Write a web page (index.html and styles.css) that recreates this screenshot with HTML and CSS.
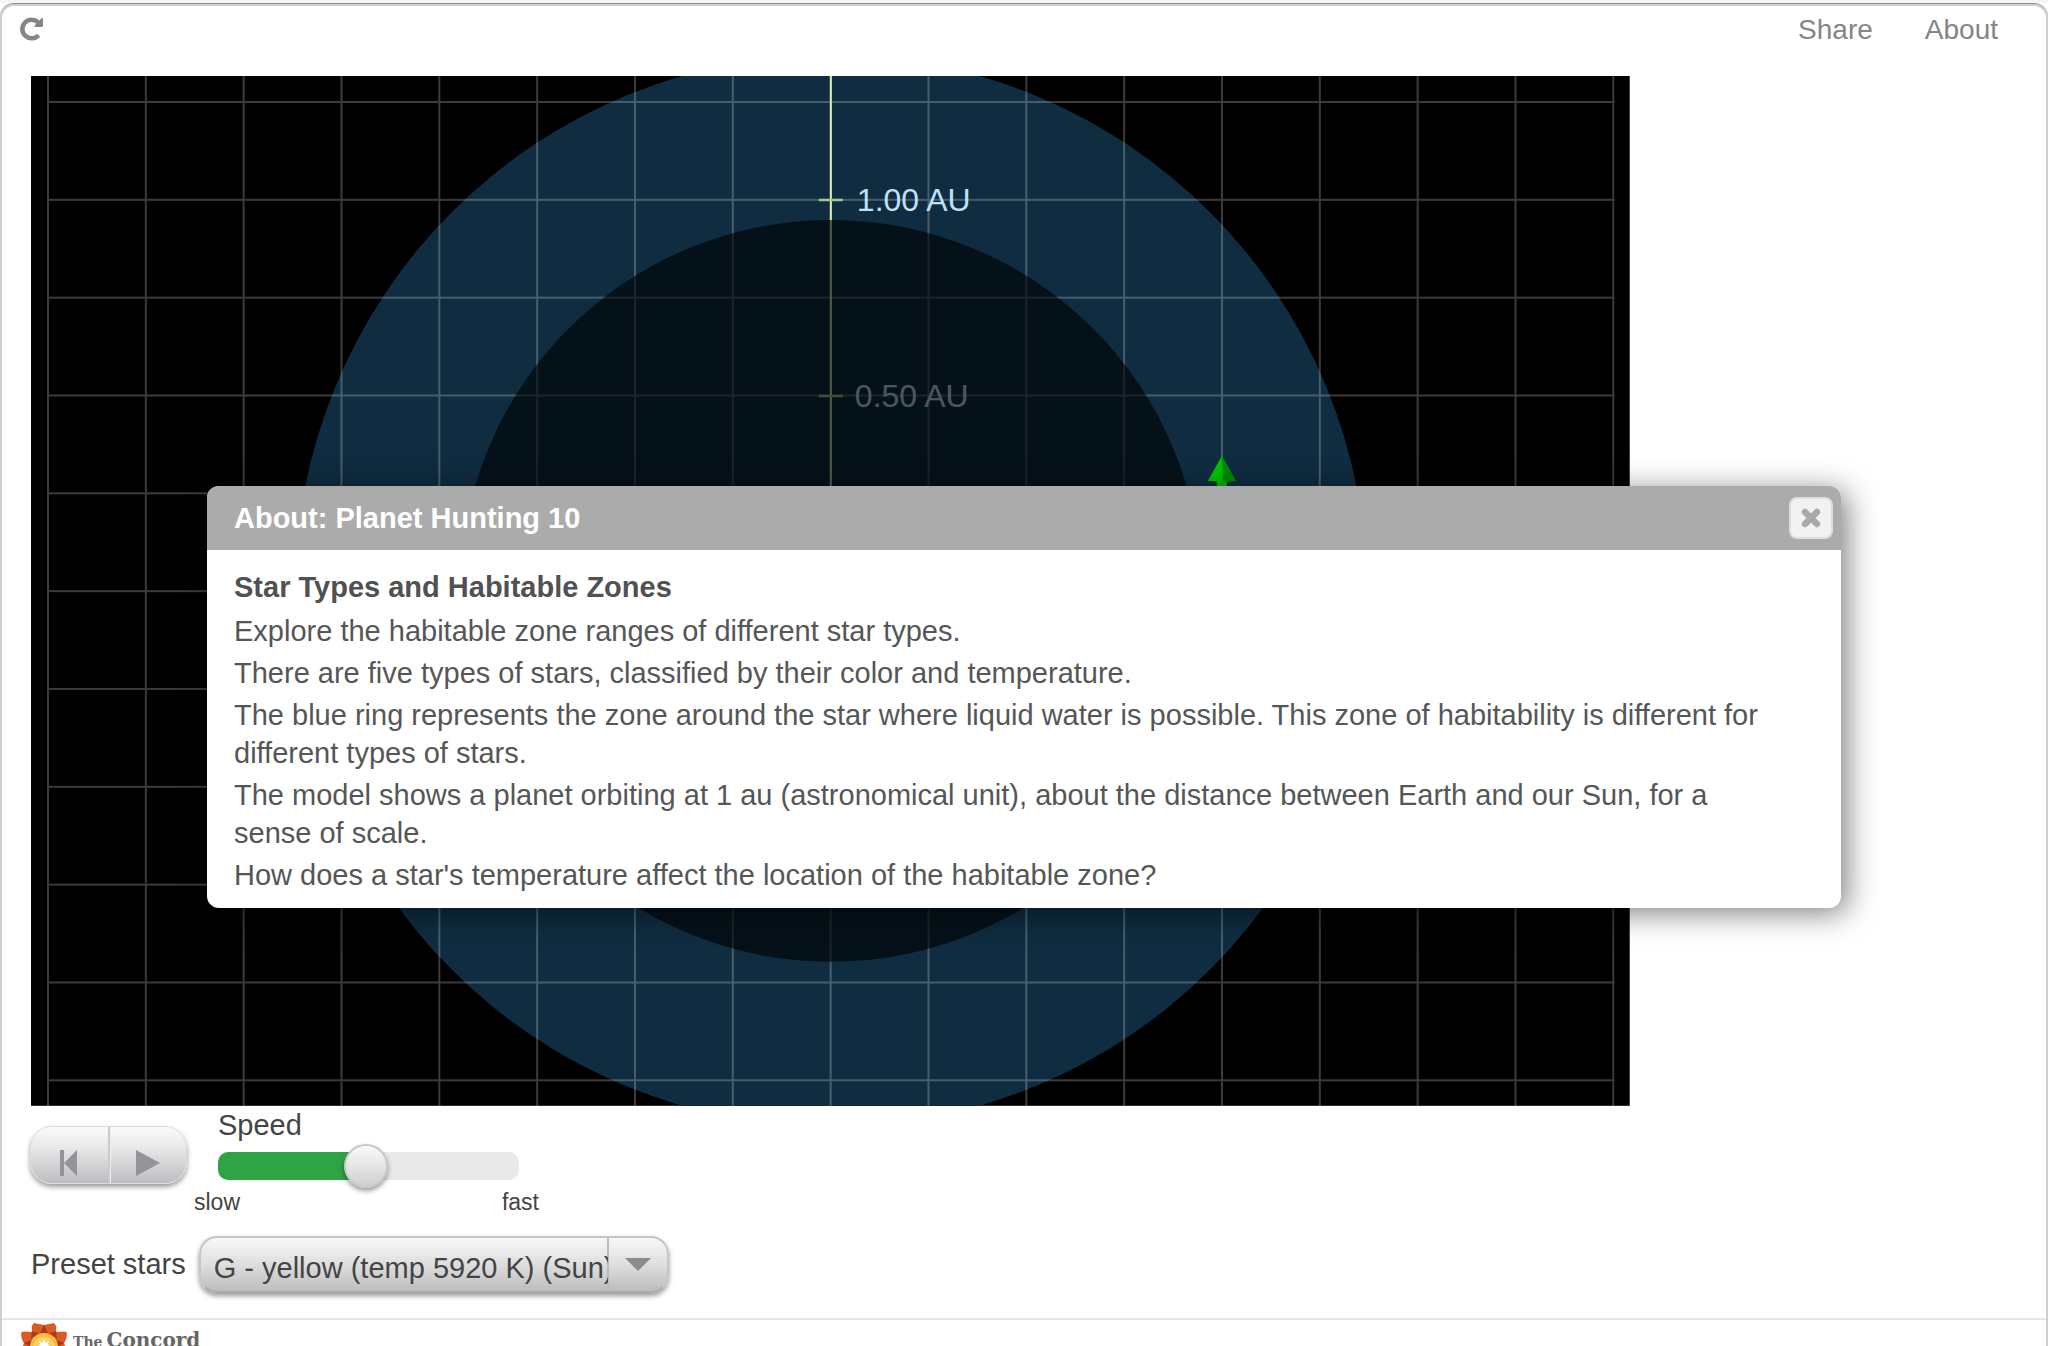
FILE: index.html
```html
<!DOCTYPE html>
<html lang="en">
<head>
<meta charset="utf-8">
<title>Planet Hunting 10</title>
<link rel="stylesheet" href="styles.css">
</head>
<body>
<div class="frame">
  <header class="topbar">
    <button class="reload" type="button" aria-label="Reload">
      <svg width="24" height="24" viewBox="0 0 24 24"><path d="M18.6 18.2A9.3 9.3 0 1 1 18 5.2" fill="none" stroke="#858585" stroke-width="4.6"/><path d="M23 1.6V8.8Q23 10 21.800 10H15.400Q14 9.800 14.600 8.600L21.200 1.600Q22.600 .6 23 1.600Z" fill="#858585"/></svg>
    </button>
    <nav class="links">
      <a href="#share">Share</a>
      <a href="#about">About</a>
    </nav>
  </header>

  <main class="model">
    <svg class="space" viewBox="0 0 1599 1030" role="img" aria-label="Habitable zone of the star">
      <defs>
        <pattern id="grid" x="16" y="25" width="97.85" height="97.85" patternUnits="userSpaceOnUse">
          <path d="M0 1H97.900M1 0V97.900" stroke="#fff" stroke-opacity=".23" stroke-width="2" fill="none"/>
        </pattern>
      </defs>
      <rect width="1599" height="1030" fill="#000"/>
      <circle cx="800" cy="515" r="536" fill="#0f2c40"/>
      <rect x="16" y="0" width="1568" height="1030" fill="url(#grid)"/>
      <path d="M800 0V515" stroke="#d6efb4" stroke-width="2"/>
      <path d="M788 124H812M788 320H812" stroke="#a9c596" stroke-width="2.500"/>
      <g class="au"><text x="826" y="135">1.00 AU</text><text x="824" y="331">0.50 AU</text></g>
      <circle cx="800" cy="515" r="371" fill="#000" fill-opacity=".61"/>
      <path d="M1186 405H1196V440H1186Z" fill="#0b0"/>
      <path d="M1191 380L1205 405L1191 406L1177 405Z" fill="#00c400"/>
      <path d="M1191 380L1205 405L1192 406Z" fill="#008a00"/>
    </svg>

    <div class="controls">
      <div class="playback">
        <button type="button" aria-label="Reset"><svg width="20" height="26" viewBox="0 0 20 26"><path d="M1 0H5V26H1ZM18 0V26L5 13Z" fill="#929497"/></svg></button>
        <button type="button" aria-label="Play"><svg width="24" height="26" viewBox="0 0 24 26"><path d="M0 0L24 13L0 26Z" fill="#929497"/></svg></button>
      </div>
      <div class="speed">
        <label for="speed">Speed</label>
        <input id="speed" type="range" min="0" max="100" value="49">
        <div class="ends"><span>slow</span><span>fast</span></div>
      </div>
    </div>

    <div class="preset">
      <label for="star">Preset stars</label>
      <div class="picker">
        <select id="star"><option>G - yellow (temp 5920 K) (Sun)</option></select>
        <svg class="arrow" width="26" height="13" viewBox="0 0 26 13"><path d="M0 0H26L13 13Z" fill="#8c8c8c"/></svg>
      </div>
    </div>
  </main>

  <footer class="footer">
    <svg width="48" height="48" viewBox="0 0 48 48">
      <g fill="#d95b26">
        <path d="M12 14L11.700 4L14 1L24 3L34 1L36.300 4L36 14L24 22Z"/>
        <path d="M14 10L3 9.500L1 11L1.500 16L5 24L12 24ZM34 10L45 9.500L47 11L46.500 16L43 24L36 24Z"/>
        <path d="M5 20L1 27L2 31L8 38L16 30ZM43 20L47 27L46 31L40 38L32 30ZM8 34L8 45L22 46L24 36ZM40 34L40 45L26 46L24 36Z"/>
      </g>
      <path d="M12 9.500L19 11L11 17ZM36 9.500L29 11L37 17ZM24 3L28 11H20ZM4 21L11 18V25ZM44 21L37 18V25Z" fill="#a83a18"/>
      <circle cx="24" cy="25" r="14" fill="#f9b942"/>
      <circle cx="24" cy="26" r="11" fill="#fcd165"/>
      <path d="M24 17L25.500 21L29 19L27.500 22.500L32 25L27.500 27L24 33L20.500 27L16 25L20.500 22.500L19 19L22.500 21Z" fill="#fff"/>
    </svg>
    <span class="brand"><small>The</small>Concord</span>
  </footer>
</div>

<section class="dialog" role="dialog" aria-labelledby="dialog-title">
  <header class="dialog-head">
    <h2 id="dialog-title">About: Planet Hunting 10</h2>
    <button class="close" type="button" aria-label="Close"><svg width="20" height="20" viewBox="0 0 20 20"><path d="M4 4L16 16M16 4L4 16" stroke="#a9a9a9" stroke-width="6.500" stroke-linecap="round"/></svg></button>
  </header>
  <div class="dialog-body">
    <h3>Star Types and Habitable Zones</h3>
    <p>Explore the habitable zone ranges of different star types.</p>
    <p>There are five types of stars, classified by their color and temperature.</p>
    <p>The blue ring represents the zone around the star where liquid water is possible. This zone of habitability is different for different types of stars.</p>
    <p>The model shows a planet orbiting at 1 au (astronomical unit), about the distance between Earth and our Sun, for a sense of scale.</p>
    <p>How does a star's temperature affect the location of the habitable zone?</p>
  </div>
</section>
</body>
</html>
```
FILE: styles.css
```css
* { box-sizing: border-box; }

body {
  margin: 0;
  height: 100vh;
  overflow: hidden;
  border-top: 3px solid #f5f5f6;
  background: #fff;
  color: #444;
  font-family: "Liberation Sans", Arial, sans-serif;
  font-size: 29px;
}

button, select, input { font: inherit; color: inherit; margin: 0; }

.frame {
  border: 2px solid #cfcfcf;
  border-radius: 14px;
  box-shadow: 0 -1px #8e8e90;
  margin-top: 1px;
}

.topbar {
  display: flex;
  justify-content: space-between;
  height: 70px;
  padding: 10px 48px 0 18px;
}

.reload {
  width: 24px;
  height: 26px;
  padding: 0;
  border: 0;
  background: none;
}

.reload svg, .close svg, .playback svg { display: block; }

.links { display: flex; gap: 52px; font-size: 28px; line-height: 28px; }
.links a { color: #858585; text-decoration: none; }

.model { padding: 0 29px 25px; }

.space { display: block; width: 80.5%; }
.au { fill: #bfe0f6; font-size: 32px; }

.controls { display: flex; gap: 7px; align-items: flex-start; }

.playback {
  display: flex;
  width: 157px;
  height: 58px;
  margin: 20px 0 0 -1px;
  border: 1px solid #dcdcdd;
  border-radius: 22px;
  background: linear-gradient(#fbfbfb, #e6e6e7 40%, #bcbdc0);
  box-shadow: 0 3px 5px rgba(0, 0, 0, .4);
}

.playback button {
  display: flex;
  flex: 1;
  align-items: center;
  justify-content: center;
  padding: 16px 0 0;
  border: 0;
  background: none;
}

.playback button + button { border-left: 2px solid #c9cacc; box-shadow: inset 1px 0 #eee; }

.speed { width: 345px; }
.speed label { display: block; padding-left: 24px; line-height: 38px; }

.speed input {
  display: block;
  appearance: none;
  width: 301px;
  height: 44px;
  margin: 0 24px;
  background: none;
}

.speed input::-webkit-slider-runnable-track {
  height: 28px;
  border-radius: 10px;
  background: linear-gradient(90deg, #2fa444 49%, #e9e9e9 49%);
}

.speed input::-webkit-slider-thumb {
  appearance: none;
  width: 44px;
  height: 44px;
  margin-top: -8px;
  border: 2px solid #c8c8c8;
  border-radius: 50%;
  background: linear-gradient(#fafafa, #cfcfcf);
  box-shadow: 0 3px 5px rgba(0, 0, 0, .4);
}

.ends {
  display: flex;
  justify-content: space-between;
  font-size: 23px;
  line-height: 28px;
}

.preset { display: flex; align-items: center; gap: 13px; margin-top: 20px; }

.picker { position: relative; width: 470px; }

.picker select {
  appearance: none;
  display: block;
  width: 100%;
  height: 57px;
  padding: 7px 59px 0 13px;
  border: 2px solid #c6c6c6;
  border-bottom-color: #a9a9a9;
  border-radius: 18px;
  background:
    linear-gradient(#bbb, #bbb) right 58px top 0 / 2px 100% no-repeat,
    linear-gradient(#f8f8f8, #dedede 50%, #bdbdbd);
  box-shadow: 0 3px 5px rgba(0, 0, 0, .4);
}

.arrow { position: absolute; right: 18px; top: 22px; pointer-events: none; }

.footer {
  display: flex;
  gap: 5px;
  padding: 2px 18px;
  border-top: 2px solid #e6e6e6;
}

.brand {
  padding-top: 4px;
  color: #666;
  font: bold 20px/28px "DejaVu Serif", serif;
}

.brand small { margin-right: 4px; font-size: 14px; }

.dialog {
  position: absolute;
  top: 486px;
  left: 50%;
  width: 80%;
  max-width: 1634px;
  transform: translateX(-50%);
  overflow: hidden;
  border-radius: 12px;
  background: #fff;
  color: #555657;
  box-shadow: 6px 5px 30px rgba(0, 0, 0, .5);
}

.dialog-head {
  display: flex;
  align-items: center;
  justify-content: space-between;
  height: 64px;
  padding: 0 8px 0 27px;
  background: #ababab;
  color: #fff;
}

.dialog h2, .dialog h3 { margin: 0; font-size: 29px; }
.dialog-body { padding: 18px 60px 10px 27px; line-height: 38px; }
.dialog h3 { margin-bottom: 6px; color: #505152; }
.dialog p { margin: 0 0 4px; }

.close {
  display: flex;
  align-items: center;
  justify-content: center;
  width: 44px;
  height: 42px;
  padding: 0;
  border: 2px solid #dedede;
  border-radius: 8px;
  background: #f2f2f2;
}
```
